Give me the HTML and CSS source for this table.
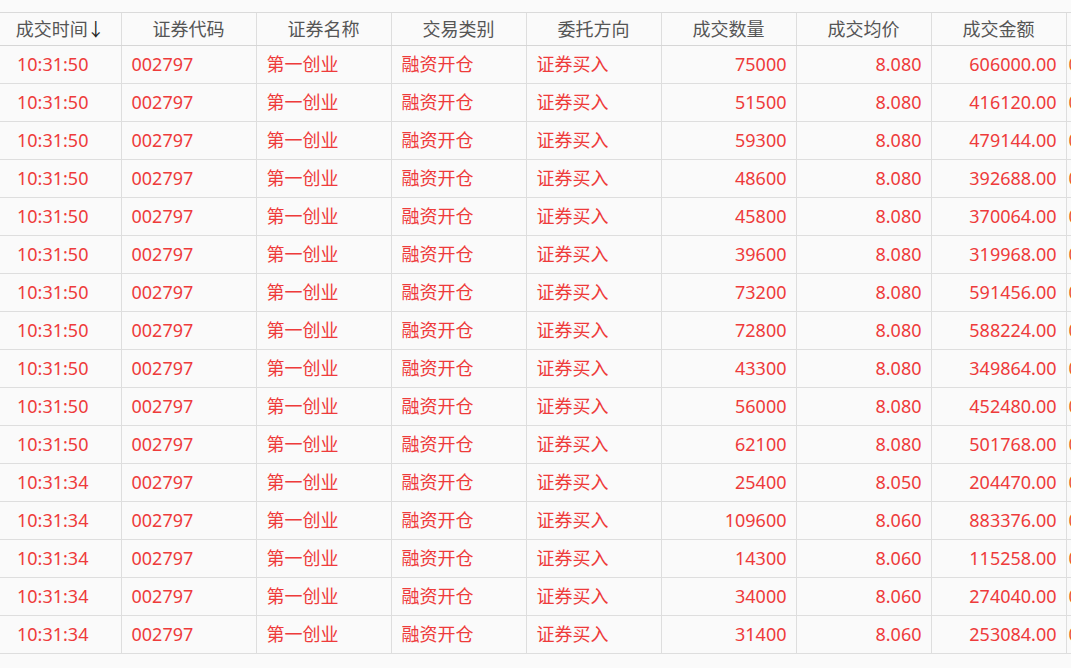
FILE: index.html
```html
<!DOCTYPE html>
<html lang="zh-CN">
<head>
<meta charset="utf-8">
<title>成交明细</title>
<link rel="stylesheet" href="styles.css">
</head>
<body>
<div class="wrap">
<table class="grid">
<colgroup>
<col class="c-first"><col class="c"><col class="c"><col class="c"><col class="c"><col class="c"><col class="c"><col class="c"><col class="c">
</colgroup>
<thead>
<tr>
<th>成交时间<span class="arrow">↓</span></th><th>证券代码</th><th>证券名称</th><th>交易类别</th><th>委托方向</th><th>成交数量</th><th>成交均价</th><th>成交金额</th><th></th>
</tr>
</thead>
<tbody>
<tr><td class="t">10:31:50</td><td>002797</td><td>第一创业</td><td>融资开仓</td><td>证券买入</td><td class="r">75000</td><td class="r">8.080</td><td class="r">606000.00</td><td class="x">0</td></tr>
<tr><td class="t">10:31:50</td><td>002797</td><td>第一创业</td><td>融资开仓</td><td>证券买入</td><td class="r">51500</td><td class="r">8.080</td><td class="r">416120.00</td><td class="x">0</td></tr>
<tr><td class="t">10:31:50</td><td>002797</td><td>第一创业</td><td>融资开仓</td><td>证券买入</td><td class="r">59300</td><td class="r">8.080</td><td class="r">479144.00</td><td class="x">0</td></tr>
<tr><td class="t">10:31:50</td><td>002797</td><td>第一创业</td><td>融资开仓</td><td>证券买入</td><td class="r">48600</td><td class="r">8.080</td><td class="r">392688.00</td><td class="x">0</td></tr>
<tr><td class="t">10:31:50</td><td>002797</td><td>第一创业</td><td>融资开仓</td><td>证券买入</td><td class="r">45800</td><td class="r">8.080</td><td class="r">370064.00</td><td class="x">0</td></tr>
<tr><td class="t">10:31:50</td><td>002797</td><td>第一创业</td><td>融资开仓</td><td>证券买入</td><td class="r">39600</td><td class="r">8.080</td><td class="r">319968.00</td><td class="x">0</td></tr>
<tr><td class="t">10:31:50</td><td>002797</td><td>第一创业</td><td>融资开仓</td><td>证券买入</td><td class="r">73200</td><td class="r">8.080</td><td class="r">591456.00</td><td class="x">0</td></tr>
<tr><td class="t">10:31:50</td><td>002797</td><td>第一创业</td><td>融资开仓</td><td>证券买入</td><td class="r">72800</td><td class="r">8.080</td><td class="r">588224.00</td><td class="x">0</td></tr>
<tr><td class="t">10:31:50</td><td>002797</td><td>第一创业</td><td>融资开仓</td><td>证券买入</td><td class="r">43300</td><td class="r">8.080</td><td class="r">349864.00</td><td class="x">0</td></tr>
<tr><td class="t">10:31:50</td><td>002797</td><td>第一创业</td><td>融资开仓</td><td>证券买入</td><td class="r">56000</td><td class="r">8.080</td><td class="r">452480.00</td><td class="x">0</td></tr>
<tr><td class="t">10:31:50</td><td>002797</td><td>第一创业</td><td>融资开仓</td><td>证券买入</td><td class="r">62100</td><td class="r">8.080</td><td class="r">501768.00</td><td class="x">0</td></tr>
<tr><td class="t">10:31:34</td><td>002797</td><td>第一创业</td><td>融资开仓</td><td>证券买入</td><td class="r">25400</td><td class="r">8.050</td><td class="r">204470.00</td><td class="x">0</td></tr>
<tr><td class="t">10:31:34</td><td>002797</td><td>第一创业</td><td>融资开仓</td><td>证券买入</td><td class="r">109600</td><td class="r">8.060</td><td class="r">883376.00</td><td class="x">0</td></tr>
<tr><td class="t">10:31:34</td><td>002797</td><td>第一创业</td><td>融资开仓</td><td>证券买入</td><td class="r">14300</td><td class="r">8.060</td><td class="r">115258.00</td><td class="x">0</td></tr>
<tr><td class="t">10:31:34</td><td>002797</td><td>第一创业</td><td>融资开仓</td><td>证券买入</td><td class="r">34000</td><td class="r">8.060</td><td class="r">274040.00</td><td class="x">0</td></tr>
<tr><td class="t">10:31:34</td><td>002797</td><td>第一创业</td><td>融资开仓</td><td>证券买入</td><td class="r">31400</td><td class="r">8.060</td><td class="r">253084.00</td><td class="x">0</td></tr>
</tbody>
</table>
</div>
</body>
</html>
```
FILE: styles.css
```css
html, body {
  margin: 0;
  padding: 0;
  background: #fafafa;
  overflow: hidden;
}
body {
  font-family: "Noto Sans", "Noto Sans CJK SC", sans-serif;
  font-size: 18px;
}
.wrap {
  padding-top: 12px;
  width: 1300px;
}
.grid {
  border-collapse: collapse;
  table-layout: fixed;
  width: 1201px;
}
.c-first { width: 121px; }
.c { width: 135px; }
.grid th {
  height: 32px;
  padding: 0;
  font-weight: normal;
  color: #555;
  text-align: center;
  border-top: 1px solid #dadada;
  border-bottom: 1px solid #d6d6d6;
  border-left: 1px solid #dedede;
  line-height: 30px;
  white-space: nowrap;
}
.grid th:first-child { border-left: none; }
.arrow {
  color: #222;
  margin-left: -1px;
}
.grid td {
  height: 36px;
  padding: 0 9px 1px 10px;
  color: #ee3b3b;
  border-bottom: 1px solid #dedede;
  border-left: 1px solid #dedede;
  white-space: nowrap;
  overflow: hidden;
  line-height: 35px;
}
.grid td:first-child { border-left: none; }
.grid td.t { padding-left: 17px; }
.grid td.r { text-align: right; }
.grid td.x { padding-left: 2px; color: #ec5a2a; }
```
